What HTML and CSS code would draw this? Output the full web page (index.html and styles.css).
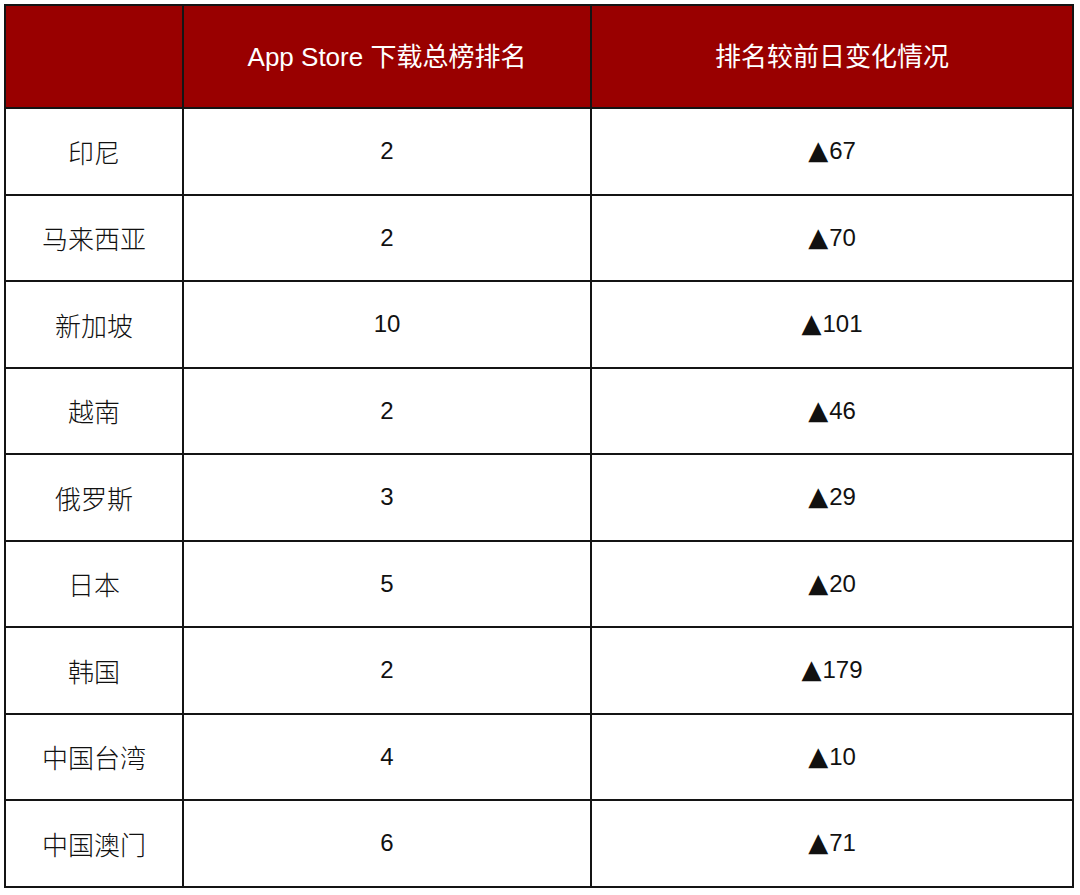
FILE: index.html
```html
<!DOCTYPE html>
<html lang="zh">
<head>
<meta charset="utf-8">
<link rel="stylesheet" href="styles.css">
</head>
<body>
<table class="rank">
  <colgroup>
    <col class="c1"><col class="c2"><col class="c3">
  </colgroup>
  <thead>
    <tr><th></th><th>App Store 下载总榜排名</th><th>排名较前日变化情况</th></tr>
  </thead>
  <tbody>
    <tr><td class="name">印尼</td><td>2</td><td><span class="up">▲</span>67</td></tr>
    <tr><td class="name">马来西亚</td><td>2</td><td><span class="up">▲</span>70</td></tr>
    <tr><td class="name">新加坡</td><td>10</td><td><span class="up">▲</span>101</td></tr>
    <tr><td class="name">越南</td><td>2</td><td><span class="up">▲</span>46</td></tr>
    <tr><td class="name">俄罗斯</td><td>3</td><td><span class="up">▲</span>29</td></tr>
    <tr><td class="name">日本</td><td>5</td><td><span class="up">▲</span>20</td></tr>
    <tr><td class="name">韩国</td><td>2</td><td><span class="up">▲</span>179</td></tr>
    <tr><td class="name">中国台湾</td><td>4</td><td><span class="up">▲</span>10</td></tr>
    <tr><td class="name">中国澳门</td><td>6</td><td><span class="up">▲</span>71</td></tr>
  </tbody>
</table>
</body>
</html>
```
FILE: styles.css
```css
html, body {
  margin: 0;
  padding: 0;
  background: #ffffff;
}
body {
  padding: 4px 0 0 4px;
  font-family: "Liberation Sans", "Noto Sans CJK SC", sans-serif;
}
.rank {
  border-collapse: collapse;
  width: 1068px;
  table-layout: fixed;
}
.c1 { width: 178px; }
.c2 { width: 408px; }
.c3 { width: 482px; }
.rank th, .rank td {
  border: 2px solid #141414;
  text-align: center;
  vertical-align: middle;
  padding: 0;
}
.rank th {
  background: #990000;
  color: #ffffff;
  height: 97px;
  padding-bottom: 4px;
  font-size: 26px;
  font-weight: normal;
  font-family: "Liberation Sans", "Noto Sans CJK SC", sans-serif;
}
.rank td {
  height: 84.5px;
  font-size: 24px;
  color: #111111;
}
.rank td.name {
  font-family: "Noto Sans CJK SC", sans-serif;
  font-weight: 300;
  font-size: 26px;
}
.up {
  font-family: "DejaVu Sans", sans-serif;
  font-size: 26px;
  line-height: 1;
  margin-right: 1px;
}
```
